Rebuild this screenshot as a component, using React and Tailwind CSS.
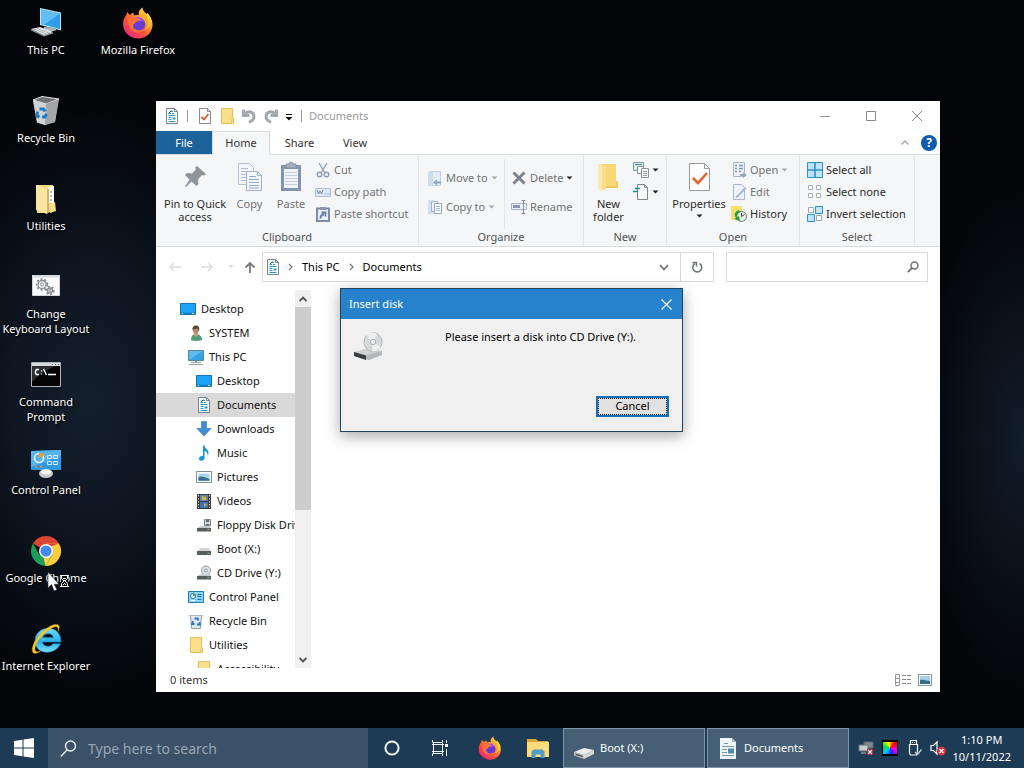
import React from "react";

/* ---------- shared shapes ---------- */

const Svg = ({ s = 16, w, h, box, children, className = "" }) => (
  <svg
    width={w || s}
    height={h || s}
    viewBox={box || `0 0 ${w || s} ${h || s}`}
    className={`shrink-0 ${className}`}
    aria-hidden="true"
  >
    {children}
  </svg>
);

const DocIcon = () => (
  <Svg>
    <path d="M2.500.5h8l3 3v12h-11z" fill="#fff" stroke="#74858f" />
    <path d="M10.500.5v3h3" fill="none" stroke="#74858f" />
    <path d="M7 3.500h2M5 5.500h2M8 5.500h2M4.500 7.500h7M4.500 9.500h3M4.500 11.500h3M4.500 13.500h7" stroke="#2d93c4" />
    <path d="M8.500 9.500h3v2h-3z" fill="#2d93c4" />
    <path d="M4.500 5.500l3-3" stroke="#1b6d85" />
  </Svg>
);

const Floppy = () => (
  <Svg>
    <path d="M8.500 2.500h6v6h-6z" fill="#d4d8da" stroke="#7b8083" />
    <path d="M10 3h3v2h-3zM10 7h3v1h-3z" fill="#60666a" />
    <path d="M4 9h10l1 2.500H1z" fill="#c9ccce" />
    <path d="M1 11h14v3.500H1z" fill="#5a5d60" />
    <path d="M11.500 12.500h2" stroke="#76d06c" />
  </Svg>
);

const Drive = () => (
  <Svg>
    <path d="M4 7h9l2 3.500H1z" fill="#d2d4d6" />
    <path d="M1 10h14v4H1z" fill="#5a5d60" />
    <path d="M11.500 12.500h2" stroke="#76d06c" />
  </Svg>
);

const CdDrive = () => (
  <Svg>
    <circle cx="10" cy="5.500" r="4.500" fill="#e1e3e4" stroke="#969a9d" />
    <circle cx="10" cy="5.500" r="1.500" fill="#fff" stroke="#969a9d" />
    <path d="M4 9h10l1 2.500H1z" fill="#c9ccce" />
    <path d="M1 11h14v3.500H1z" fill="#5a5d60" />
    <path d="M11.500 12.500h2" stroke="#76d06c" />
  </Svg>
);

const DesktopIcon = () => (
  <Svg>
    <path d="M.5 2.500h15v11H.5z" fill="#1ea1f8" stroke="#1272b5" />
    <path d="M1 11.500h14v1.500H1z" fill="#1780cb" />
    <path d="M2 12.500h1M12 12.500h2" stroke="#fff" />
  </Svg>
);

const UserIcon = () => (
  <Svg>
    <path d="M3 15c0-4 2-6 5-6s6 2 6 6c-3 1.200-8 1.200-11 0z" fill="#4f9d77" />
    <path d="M6 8h4l-.5 3L8 12l-2-1.500z" fill="#c99a7c" />
    <ellipse cx="7.800" cy="5" rx="2.900" ry="3.800" fill="#b98a6d" />
    <path d="M4.500 5C4 2 5.500.5 8 .5s4 2 3 5.500c-.5.5-.8-2-1.500-2.500-1.500.5-3.500.3-5 1.500z" fill="#57463d" />
  </Svg>
);

const PcSmall = () => (
  <Svg>
    <path d="M.5 1.500h15v10H.5z" fill="#5cbcf0" stroke="#5c8499" />
    <path d="M1 11 15 2v9z" fill="#37a1e2" />
    <path d="M7 12h2v1H7z" fill="#8b9ba4" />
    <path d="M3 13.500h10M1 15.500h14" stroke="#94a4ad" />
  </Svg>
);

const DownIcon = () => (
  <Svg>
    <path d="M5.500.5h5v7h4.500L8 15 1 7.500h4.500z" fill="#3d8ddb" stroke="#2e74b9" strokeWidth=".6" />
  </Svg>
);

const MusicIcon = () => (
  <Svg>
    <path d="M7 .5h1.500c.3 3 4 3.500 4 7.500 0 1-.4 2-1 2.800.4-3-1-4-3-5V13c0 1.700-1.500 2.800-3.200 2.800S3 14.800 3 13.500s1.300-2.600 3-2.600c.4 0 .7 0 1 .2z" fill="#1496de" />
  </Svg>
);

const PictureIcon = () => (
  <Svg>
    <path d="M.5 2.500h15v11H.5z" fill="#fff" stroke="#7e8c95" />
    <path d="M2.500 4.500h11v7h-11z" fill="#a9d6ee" />
    <path d="M2.500 8c3-1.500 6 0 11 2v1.500h-11z" fill="#3c6f77" />
    <path d="M2.500 10c4-1 8 0 11 .5v1h-11z" fill="#2e70a6" />
  </Svg>
);

const VideoIcon = () => (
  <Svg>
    <path d="M1 1h14v15H1z" fill="#3b3d40" />
    <path d="M4 2h8v6H4z" fill="#6d7f9e" />
    <path d="M4 9h8v6H4z" fill="#3f73b1" />
    <path d="M6 3l4 1v3H6zM8 10l3 2-3 2z" fill="#c8b64a" />
    <path d="M2.500 2v13M13.500 2v13" stroke="#e6e6e6" strokeDasharray="1.500 1.500" />
  </Svg>
);

const ControlSmall = () => (
  <Svg>
    <path d="M.5 2.500h15v11H.5z" fill="#8ed3f7" stroke="#1d7cb5" />
    <circle cx="5" cy="7" r="2.500" fill="#e8f6e0" stroke="#2f7aa8" />
    <path d="M5 7V4.500A2.500 2.500 0 0 1 7.500 7z" fill="#4d9b58" />
    <path d="M9.500 5.500h4M9.500 7.500h4M9.500 10.500h4" stroke="#1870b6" />
    <path d="M3 11.500h4" stroke="#fff" />
  </Svg>
);

const BinSmall = () => (
  <Svg>
    <path d="M2.500 2.500h11l-1 13h-9z" fill="#dce7ee" stroke="#8fa1ac" />
    <path d="M1 2.500h14" stroke="#a9b8c1" />
    <path d="M6.500 5.500h3l1 2M5 8l-1 3h2.500M11.500 9l.5 2.500H9" fill="none" stroke="#2e74b5" strokeWidth="1.800" />
  </Svg>
);

const FolderSmall = () => (
  <Svg>
    <path d="M2.500.5h11v9l1 1v5h-12z" fill="#fbe08c" stroke="#e3bf57" />
    <path d="M13.500 9.500l-1.500 6" stroke="#e8c766" />
  </Svg>
);

const PropsSmall = () => (
  <Svg>
    <path d="M2.500.5h8l3 3v12h-11z" fill="#fff" stroke="#8b8b8b" />
    <path d="M10.500.5v3h3" fill="none" stroke="#8b8b8b" />
    <path d="M4.500 9l2.500 2.500 4.500-5.500" fill="none" stroke="#dc5a2e" strokeWidth="1.800" />
  </Svg>
);

const Firefox = ({ s = 32 }) => (
  <Svg s={s} box="0 0 32 32">
    <defs>
      <linearGradient id="fx" x1="1" y1="0" x2=".15" y2="1">
        <stop offset="0" stopColor="#fff44f" />
        <stop offset=".35" stopColor="#ffa62b" />
        <stop offset=".65" stopColor="#ff5038" />
        <stop offset="1" stopColor="#e0208c" />
      </linearGradient>
    </defs>
    <path d="M3 10c1-1 1.500-3 2.500-5 .8 1.500 1.500 2 2.500 3 1-1 2-2 3.500-2.500-.3 1.500 0 2 1 3 1.500-.5 3-.5 4.500-.2C16 5.500 17.500 2.500 20.500.5c0 3 2 4.500 4 6.500l1-1c3.500 4 5.500 8 5 13C29.500 26.500 24 31.500 16.500 31.500 8 31.500 1 25.500 1 17c0-2.500.6-5 2-7z" fill="url(#fx)" />
    <circle cx="16.500" cy="17.500" r="6.800" fill="#6a3bd0" />
    <path d="M12 11c4-2.500 9-.5 10.500 4-2-1.500-4-1-5.500-.5z" fill="#9059ff" />
    <path d="M5 13c2-3 6-4 9-2.500 1 .5 2 1.500 4 1.500 0 2-2.500 2.500-4 3-1 1-1 2-3 3-1 4 6 8 11.500 3C20 27.500 9 27 7 19c-.6-2-1-4-2-6z" fill="#ff7139" />
    <path d="M20.500.5c0 5 5.500 7 6 13 .3 4-1 7-4 9 5-1 8-6 6-12l-3-4-1 1c-2-2-4-3.500-4-7z" fill="#ffd93b" opacity=".85" />
  </Svg>
);

/* ---------- desktop icons (32px) ---------- */

const PcBig = () => (
  <Svg s={32}>
    <path d="M10 1l21 4.500v18L10 18z" fill="#bfe2f5" />
    <path d="M11 2.500l19 4v15.500L11 17z" fill="#2d9fea" />
    <path d="M11 2.500l19 4L14 17.700 11 17z" fill="#62bdf3" />
    <path d="M14 20l12 .5v3l-7 1.500-6-2z" fill="#aab3b9" />
    <path d="M1 22l9-2 13 5-9 3.500z" fill="#e4e8ea" />
    <path d="M1 22v1.500l13 6V28zM14 28v1.500l9-3V25z" fill="#8d9499" />
    <path d="M4 22.300l12 4.500M7 21.500l12 4.500" stroke="#9ba3a9" strokeWidth=".8" />
  </Svg>
);

const BinBig = () => (
  <Svg s={32}>
    <path d="M3 5l26-1-4 23-10 3-8-2.500z" fill="#b2b6b8" />
    <path d="M3 5l13 4-1 21-8-2.500z" fill="#d0d3d5" />
    <path d="M3 5l9-3.500L29 4l-13 5z" fill="#6f7476" stroke="#dfe1e2" />
    <path d="M16 9l12.500-4.500L25 27l-10 3z" fill="#a3a6a8" />
    <g transform="translate(12 17.500)" fill="none" stroke="#1d7cc9" strokeWidth="3">
      <path d="M-2.500-3.500h4l1.500 2.500M-4.500-1l-.5 4.500 2.500 1M4.500 1.500l-1.500 3h-3" />
    </g>
  </Svg>
);

const UtilBig = () => (
  <Svg s={32}>
    <path d="M6 2h17l1 25-6 3H7z" fill="#f5d883" />
    <path d="M18 4l6-1v17h-6z" fill="#fff" />
    <path d="M21 8v12" stroke="#4d7890" strokeDasharray="2 2" />
    <path d="M6 2l11 4v25L6 27z" fill="#fbe5a0" />
    <path d="M17 6v25l2-2V6z" fill="#d7b458" />
    <path d="M19 22l6-3 1 9-6 2z" fill="#f7dd8c" />
  </Svg>
);

const Gear = ({ x, y, r }) => (
  <g transform={`translate(${x} ${y})`} fill="none" stroke="#888d91">
    <circle r={r} strokeWidth="1.300" />
    <circle r={r + 1.3} strokeWidth="1.800" strokeDasharray="2 1.800" />
    <circle r={r / 2.5} />
  </g>
);

const KeyboardBig = () => (
  <Svg s={32}>
    <path d="M2.500 4.500h27v20h-27z" fill="#fbfbfb" stroke="#cfd4d8" />
    <path d="M2 4h28v2.500H2z" fill="#d4dae2" />
    <Gear x={12} y={13.500} r={4} />
    <Gear x={20} y={19.500} r={2.500} />
  </Svg>
);

const CmdBig = () => (
  <Svg s={32}>
    <path d="M1.500 3.500h29v24h-29z" fill="#050505" stroke="#aeb3b7" />
    <path d="M2 4h28v3H2z" fill="#d7dbe0" />
    <path d="M22 5.500h1M25 5.500h1M28 5.500h1" stroke="#65727e" />
    <path d="M2 7h24Q12 12 2 23z" fill="#2d3033" />
    <path d="M9 10.500H6.500L5.500 12v2.500l1 1H9M11.500 11.500v1M11.500 14.500v1M13.500 10l3 6M18 15.500h8" fill="none" stroke="#fff" strokeWidth="1.400" />
  </Svg>
);

const ControlBig = () => (
  <Svg s={32}>
    <path d="M1 4l30-1v20H1z" fill="#2f9ae0" />
    <path d="M1 4l30-1v6L1 20z" fill="#56b4ec" />
    <circle cx="9" cy="11" r="4.500" fill="none" stroke="#e6f4fb" strokeWidth="1.600" />
    <path d="M9 11V6h3.500l1.500 3z" fill="#f39c31" />
    <path d="M17.500 8.500h4v3h-4zM23.500 8.500h4v3h-4zM17.500 14.500h4v3h-4zM23.500 14.500h4v3h-4z" fill="none" stroke="#d8f0fb" />
    <path d="M5 19.500h2M10 19.500h2" stroke="#e5894e" strokeWidth="2" />
    <ellipse cx="16" cy="26.500" rx="7" ry="4.500" fill="#c9cccd" />
    <ellipse cx="16" cy="25" rx="5" ry="2.500" fill="#f6f7f7" />
  </Svg>
);

const ChromeBig = () => (
  <Svg s={32}>
    <path d="M16 16 3 8.500A15 15 0 0 1 29 8.500z" fill="#dc4437" />
    <path d="M16 8.500h13A15 15 0 0 1 15.500 31z" fill="#fdce3f" />
    <path d="M3 8.500A15 15 0 0 0 15.500 31l7-11L16 16l-6.500 4z" fill="#1f9d58" />
    <path d="M22 20 15.500 31 13 20z" fill="#fdce3f" />
    <path d="M16 8.500h13l-8 3z" fill="#dc4437" />
    <circle cx="16" cy="16" r="7" fill="#f4f4f4" />
    <circle cx="16" cy="16" r="5.500" fill="#4688f1" />
  </Svg>
);

const IeBig = () => (
  <Svg s={32}>
    <defs>
      <linearGradient id="ie" x1="0" y1="0" x2="0" y2="1">
        <stop offset="0" stopColor="#78dcfa" />
        <stop offset=".55" stopColor="#29aeea" />
        <stop offset="1" stopColor="#7be0fb" />
      </linearGradient>
    </defs>
    <path d="M31 19H12.500c.3 4.500 8 6 10.500 1.800h7.500C25 33 5 32 5 18 5 2 31 0 31 19zM12.800 14.500h10.500c-.3-5-10-5-10.500 0z" fill="url(#ie)" stroke="#1689c9" strokeWidth=".6" />
    <path d="M3.500 30C-2 25 12 4 25 1.500c5-.8 5 2.500 3 7C29 3 26 2.500 21 5.500 10 12 2 25 6 28.500c1 .8 3 .2 5-1-3 2.500-6 3.500-7.500 2.500z" fill="#fbc72b" stroke="#d99a12" strokeWidth=".4" />
  </Svg>
);

const desktopIcons = [
  { label: "This PC", Icon: PcBig },
  { label: "Recycle Bin", Icon: BinBig },
  { label: "Utilities", Icon: UtilBig },
  { label: "Change\nKeyboard Layout", Icon: KeyboardBig },
  { label: "Command\nPrompt", Icon: CmdBig },
  { label: "Control Panel", Icon: ControlBig },
  { label: "Google Chrome", Icon: ChromeBig },
  { label: "Internet Explorer", Icon: IeBig },
  { label: "Mozilla Firefox", Icon: Firefox },
];

/* ---------- ribbon ---------- */

const Caret = ({ light }) => (
  <Svg w={7} h={4}>
    <path d="M.5.5h6l-3 3z" fill={light ? "#a5a9ad" : "#222"} />
  </Svg>
);

const PinIcon = () => (
  <Svg s={32}>
    <path d="M17 5l9 8-2 1.500-2-.5-4 4.500.5 4.500-2 2-5-4.500L6 26l-1-.5 4.500-7L5 14l2-2 5 .5L16 8.500 15 6.500z" fill="#8f959b" transform="translate(1 2)" />
  </Svg>
);

const CopyIcon = () => (
  <Svg s={32}>
    <path d="M4.500 4.500h11l4 4v17h-15z" fill="#f3f7fd" stroke="#b5c0d4" />
    <path d="M7 9.500h7M7 12.500h9M7 15.500h9M7 18.500h9M7 21.500h9" stroke="#a9bee0" />
    <path d="M12.500 12.500h11l4 4v15h-15z" fill="#f3f7fd" stroke="#a4b1ca" />
    <path d="M23.500 12.500v4h4" fill="none" stroke="#a4b1ca" />
    <path d="M15 17.500h7M15 20.500h10M15 23.500h10M15 26.500h10M15 29h10" stroke="#93aad2" />
  </Svg>
);

const PasteIcon = () => (
  <Svg s={32}>
    <path d="M6.500 6.500h19v25h-19z" fill="#8296b4" stroke="#8493ab" />
    <path d="M9 10h14v19H9z" fill="#f1f5fb" />
    <path d="M11 5h3a2 2 0 0 1 4 0h3v4H11z" fill="#a6afbd" stroke="#7f8ba0" strokeWidth=".8" />
    <path d="M10 13.500h12M10 16.500h12M10 19.500h12M10 22.500h12M10 25.500h12" stroke="#c2cee0" />
  </Svg>
);

const CutIcon = () => (
  <Svg>
    <path d="M4 1l6 10M12 1 6 11" stroke="#9aa3ac" strokeWidth="1.400" />
    <circle cx="4.500" cy="12.500" r="2.300" fill="none" stroke="#8d9fb5" strokeWidth="1.400" />
    <circle cx="11.500" cy="12.500" r="2.300" fill="none" stroke="#8d9fb5" strokeWidth="1.400" />
  </Svg>
);

const CopyPathIcon = () => (
  <Svg>
    <path d="M.5 4.500h15v8H.5z" fill="#dfe8f7" stroke="#b2bdd6" />
    <path d="M2 6l1.500 4L5 7l1.500 3L8 6M9.500 10h1M11.500 10h1M13.500 10h1" fill="none" stroke="#7a81a8" />
  </Svg>
);

const ShortcutIcon = () => (
  <Svg>
    <path d="M2 2.500h12v12.500H2z" fill="#e9eff9" stroke="#7d8ba5" strokeWidth="2" />
    <path d="M5 1h6v3H5z" fill="#8a97ae" />
    <path d="M5.500 12.500C5.500 10 7 8.500 9 8.500M6.500 6.500h4V10.500" fill="none" stroke="#6a7b9c" strokeWidth="1.800" />
  </Svg>
);

const MoveIcon = () => (
  <Svg>
    <path d="M2.500 1.500h11v14h-11z" fill="#e3edf8" stroke="#c1cfe1" />
    <path d="M1 2h5v14H1z" fill="#cfdcec" />
    <path d="M14 11.500H10v-2l-4 3 4 3v-2h4z" fill="#93a5c0" />
  </Svg>
);

const CopyToIcon = () => (
  <Svg>
    <path d="M1 1h6v14H1z" fill="#d2deee" />
    <path d="M4.500 2.500h6v10h-6z" fill="#edf3fb" stroke="#a8b7cf" />
    <path d="M7.500 4.500h7v10h-7z" fill="#fff" stroke="#8fa4c4" />
    <path d="M9 7.500h4M9 9.500h4M9 11.500h4" stroke="#a5b8d8" />
  </Svg>
);

const DeleteIcon = () => (
  <Svg>
    <path d="M2.500 2.500l11 11M13.500 2.500l-11 11" stroke="#7c8390" strokeWidth="3" />
  </Svg>
);

const RenameIcon = () => (
  <Svg>
    <path d="M.5 4.500h15v6H.5z" fill="#eef3fb" stroke="#a3b1cb" />
    <path d="M2 6h7v3H2z" fill="#8d93bd" />
    <path d="M12.500 1v13M10.500 1.500h4M10.500 14.500h4" stroke="#84909f" />
  </Svg>
);

const NewFolderIcon = () => (
  <Svg s={32}>
    <path d="M7 5h16v17l2 1v6H9l-2-1z" fill="#f3c85a" />
    <path d="M5 5h4l3 3v23l-4 1-3-3z" fill="#fdeab0" />
    <path d="M11 5h12v22h-11z" fill="#f9d774" />
    <path d="M9 5l4 3v22l-4 1z" fill="#fbdf8d" />
  </Svg>
);

const NewItemIcon = () => (
  <Svg>
    <path d="M.5.5h10v8h-10z" fill="#dcefed" stroke="#7c9a9e" />
    <path d="M2 2.500h7" stroke="#3a8d8d" />
    <path d="M4.500 4.500h6v7h-6z" fill="#f7f9fb" stroke="#8a9298" />
    <path d="M8.500 6.500h7v9h-7z" fill="#fff" stroke="#8a9298" />
    <path d="M10 9.500h4M10 11.500h4M10 13.500h4" stroke="#9aa4ac" />
  </Svg>
);

const EasyAccessIcon = () => (
  <Svg>
    <path d="M4.500.5h7l3 3v12h-10z" fill="#fff" stroke="#808488" />
    <path d="M11.500.5v3h3" fill="none" stroke="#808488" />
    <path d="M2 4.500h5M0 7.500h5" stroke="#23878f" strokeWidth="1.400" />
  </Svg>
);

const PropertiesIcon = () => (
  <Svg s={32}>
    <path d="M6.500 4.500h15l5 5v22h-20z" fill="#fff" stroke="#9a9a9a" />
    <path d="M21.500 4.500v5h5" fill="none" stroke="#9a9a9a" />
    <path d="M10 19l5 5 9-10" fill="none" stroke="#e0622c" strokeWidth="2.600" />
  </Svg>
);

const OpenIcon = () => (
  <Svg>
    <path d="M2.500.5h11v14h-11z" fill="#edf2fa" stroke="#a8b5cb" />
    <path d="M4 3.500h2M8 3.500h4M4 6.500h2M8 6.500h4M4 9.500h2M8 9.500h2" stroke="#8193b4" strokeWidth="1.500" />
    <path d="M9 12h3v-2l4 3-4 3v-2H9z" fill="#98a6bd" />
  </Svg>
);

const EditIcon = () => (
  <Svg>
    <path d="M2.500.5h8l3 3v12h-11z" fill="#edf2fb" stroke="#a8b5cb" />
    <path d="M4 13.500 14 3l1.500 1.500L6 14z" fill="#a5b5cf" />
  </Svg>
);

const HistoryIcon = () => (
  <Svg>
    <path d="M0 0h11v14H0z" fill="#f9dd6f" />
    <circle cx="10.500" cy="10.500" r="5" fill="#e5ece6" stroke="#6e7a78" />
    <path d="M10.500 7v3.500l3-2" fill="none" stroke="#444" />
    <path d="M8 4c-4 1-5.500 5-3 8l-2 1 6 2-1-5-1.500 1C6 9 6.500 7 9 6z" fill="#2e9e3a" />
  </Svg>
);

const SelectAllIcon = () => (
  <Svg>
    <path d="M.5.5h15v15H.5z" fill="#bfe3fb" stroke="#2f8fd6" />
    <path d="M8 0v16M0 8h16" stroke="#2f8fd6" strokeWidth="1.600" />
  </Svg>
);

const SelectNoneIcon = () => (
  <Svg>
    <path d="M1.500 1.500h4v4h-4zM9.500 1.500h4v4h-4zM1.500 9.500h4v4h-4zM9.500 9.500h4v4h-4z" fill="#fff" stroke="#a9adb0" />
  </Svg>
);

const InvertIcon = () => (
  <Svg>
    <path d="M1.500 1.500h5v5h-5zM9.500 9.500h5v5h-5z" fill="#fff" stroke="#9ba7b0" />
    <path d="M8.500.5h7v7h-7zM.5 8.500h7v7h-7z" fill="#bfe3fb" stroke="#2f8fd6" />
  </Svg>
);

const Big = ({ Icon, children, dim, caret, className = "" }) => (
  <button
    type="button"
    className={`flex flex-col items-center text-center leading-[13px] ${dim ? "text-[#707274]" : "text-[#2b2b2b]"} ${className}`}
  >
    <Icon />
    <span className="mt-1.5">{children}</span>
    {caret && (
      <span className="mt-1">
        <Caret />
      </span>
    )}
  </button>
);

const Small = ({ Icon, children, dim, caret, label }) => (
  <button
    type="button"
    aria-label={label}
    className={`flex h-[22px] items-center gap-[3px] whitespace-nowrap ${dim ? "text-[#707274]" : "text-[#2b2b2b]"}`}
  >
    <Icon />
    {children}
    {caret && <Caret light={caret === "light"} />}
  </button>
);

const Group = ({ name, className = "", children }) => (
  <section className={`flex flex-col border-r border-[#e3e6e9] ${className}`} aria-label={name}>
    <div className="flex flex-1 pt-1">{children}</div>
    <h2 className="pb-px text-center leading-4 text-[#505254]">{name}</h2>
  </section>
);

const Ribbon = () => (
  <div className="flex h-[92px] shrink-0 overflow-hidden border-b border-[#dadbdc] bg-[#f5f6f7]">
    <Group name="Clipboard" className="w-[263px]">
      <Big Icon={PinIcon} className="w-[78px]">
        Pin to Quick access
      </Big>
      <Big Icon={CopyIcon} dim className="w-[31px]">
        Copy
      </Big>
      <Big Icon={PasteIcon} dim className="ml-2 w-[36px]">
        Paste
      </Big>
      <div className="ml-1.5">
        <Small Icon={CutIcon} dim>Cut</Small>
        <Small Icon={CopyPathIcon} dim>Copy path</Small>
        <Small Icon={ShortcutIcon} dim>Paste shortcut</Small>
      </div>
    </Group>
    <Group name="Organize" className="w-[165px]">
      <div className="flex w-[86px] flex-col gap-[7px] border-r border-[#e3e6e9] pt-2 pl-2">
        <Small Icon={MoveIcon} dim caret="light">Move to</Small>
        <Small Icon={CopyToIcon} dim caret="light">Copy to</Small>
      </div>
      <div className="flex flex-col gap-[7px] pt-2 pl-1.5">
        <Small Icon={DeleteIcon} dim caret="dark">Delete</Small>
        <Small Icon={RenameIcon} dim>Rename</Small>
      </div>
    </Group>
    <Group name="New" className="w-[83px]">
      <Big Icon={NewFolderIcon} className="ml-1 w-[41px]">
        New folder
      </Big>
      <div className="ml-1">
        <Small Icon={NewItemIcon} caret="dark" label="New item" />
        <Small Icon={EasyAccessIcon} caret="dark" label="Easy access" />
      </div>
    </Group>
    <Group name="Open" className="w-[133px]">
      <Big Icon={PropertiesIcon} caret className="w-[64px]">
        Properties
      </Big>
      <div>
        <Small Icon={OpenIcon} dim caret="light">Open</Small>
        <Small Icon={EditIcon} dim>Edit</Small>
        <Small Icon={HistoryIcon}>History</Small>
      </div>
    </Group>
    <Group name="Select" className="w-[115px]">
      <div className="ml-[7px]">
        <Small Icon={SelectAllIcon}>Select all</Small>
        <Small Icon={SelectNoneIcon}>Select none</Small>
        <Small Icon={InvertIcon}>Invert selection</Small>
      </div>
    </Group>
  </div>
);

/* ---------- explorer window ---------- */

const Undo = ({ flip }) => (
  <Svg>
    <path
      d="M2.500 1.500v6h6M3.500 6.500C6.500 2.500 13 3 13 8.500c0 3-2 4.500-5 6"
      fill="none"
      stroke="#a3a9ae"
      strokeWidth="3"
      transform={flip ? "translate(16 0) scale(-1 1)" : undefined}
    />
  </Svg>
);

const TitleBar = () => (
  <header className="flex h-[30px] shrink-0 items-center pl-2">
    <DocIcon />
    <span className="ml-[7px] h-3 w-px bg-[#999]" />
    <div className="ml-[9px] flex items-center gap-1.5">
      <button type="button" aria-label="Properties"><PropsSmall /></button>
      <button type="button" aria-label="New folder"><FolderSmall /></button>
      <button type="button" aria-label="Undo"><Undo /></button>
      <button type="button" aria-label="Redo"><Undo flip /></button>
      <button type="button" aria-label="Customize Quick Access Toolbar" className="pt-px">
        <Svg w={8} h={8}>
          <path d="M1 1.500h6" stroke="#111" />
          <path d="M.5 4h7L4 7.500z" fill="#111" />
        </Svg>
      </button>
    </div>
    <span className="ml-2 h-3 w-px bg-[#999]" />
    <h1 className="ml-[7px] text-[#999]">Documents</h1>
    <div className="ml-auto flex">
      <button type="button" aria-label="Minimize" className="flex h-7 w-[46px] items-center justify-center">
        <Svg w={10} h={10}><path d="M0 5.500h10" stroke="#999" /></Svg>
      </button>
      <button type="button" aria-label="Maximize" className="flex h-7 w-[46px] items-center justify-center">
        <Svg w={10} h={10}><path d="M.5.5h9v9h-9z" fill="none" stroke="#888" /></Svg>
      </button>
      <button type="button" aria-label="Close" className="flex h-7 w-[46px] items-center justify-center">
        <Svg w={10} h={10}><path d="M0 0l10 10M10 0L0 10" stroke="#888" /></Svg>
      </button>
    </div>
  </header>
);

const Tabs = () => (
  <nav className="flex h-6 shrink-0 items-stretch border-b border-[#dadbdc] text-[#333]">
    <button type="button" className="w-14 bg-[#1d639b] pt-px text-white">File</button>
    <button type="button" className="-mb-px w-[58px] border-x border-t border-[#dadbdc] bg-[#f5f6f7]">Home</button>
    <button type="button" className="w-[59px] pt-px">Share</button>
    <button type="button" className="w-[52px] pt-px">View</button>
    <div className="ml-auto flex items-center gap-3 pr-[3px]">
      <button type="button" aria-label="Minimize the Ribbon">
        <Svg w={8} h={5}><path d="M.5 4.500 4 1l3.500 3.500" fill="none" stroke="#999" strokeWidth="1.200" /></Svg>
      </button>
      <button type="button" aria-label="Help" className="size-4 rounded-full bg-[#0b5cad] text-center text-[12px] leading-4 font-bold text-white">
        ?
      </button>
    </div>
  </nav>
);

const Chevron = () => (
  <Svg w={5} h={8}><path d="M1 1l3 3-3 3" fill="none" stroke="#777" strokeWidth="1.200" /></Svg>
);

const AddressRow = () => (
  <div className="flex shrink-0 items-center px-3 py-[5px] text-black">
    <div className="flex w-[94px] items-center justify-between pr-1.5">
      <button type="button" aria-label="Back">
        <Svg w={14} h={10}><path d="M13 5H2M6 1 2 5l4 4" fill="none" stroke="#dadcde" strokeWidth="1.400" /></Svg>
      </button>
      <button type="button" aria-label="Forward" className="ml-2">
        <Svg w={14} h={10}><path d="M1 5h11M8 1l4 4-4 4" fill="none" stroke="#dadcde" strokeWidth="1.400" /></Svg>
      </button>
      <button type="button" aria-label="Recent locations" className="ml-1">
        <Svg w={6} h={4}><path d="M0 0h6L3 3z" fill="#dadcde" /></Svg>
      </button>
      <button type="button" aria-label="Up">
        <Svg w={12} h={12}><path d="M6 12V2M1.500 6.500 6 2l4.500 4.500" fill="none" stroke="#77797c" strokeWidth="1.800" /></Svg>
      </button>
    </div>
    <div className="flex h-[30px] flex-1 border border-[#d9d9d9]">
      <div className="flex flex-1 items-center pl-0.5">
        <DocIcon />
        <span className="ml-[7px]"><Chevron /></span>
        <button type="button" className="ml-[9px]">This PC</button>
        <span className="ml-[9px]"><Chevron /></span>
        <button type="button" className="ml-[9px]">Documents</button>
      </div>
      <button type="button" aria-label="Previous locations" className="flex w-8 items-center justify-center">
        <Svg w={10} h={7}><path d="M1 1l4 4.500L9 1" fill="none" stroke="#707376" strokeWidth="1.800" /></Svg>
      </button>
      <button type="button" aria-label="Refresh" className="flex w-[33px] items-center justify-center border-l border-[#d9d9d9]">
        <Svg w={12} h={12}>
          <path d="M8.500 2.500A4.500 4.500 0 1 1 4 2.500" fill="none" stroke="#707376" strokeWidth="1.500" />
          <path d="M1.500 1.500h4v4" fill="none" stroke="#707376" strokeWidth="1.500" />
        </Svg>
      </button>
    </div>
    <label className="ml-3 flex h-[30px] w-[202px] items-center border border-[#d9d9d9] pr-2">
      <input type="search" aria-label="Search Documents" className="min-w-0 flex-1 outline-none" />
      <Svg w={12} h={12}>
        <circle cx="7.500" cy="4.500" r="3.500" fill="none" stroke="#707376" strokeWidth="1.500" />
        <path d="M5 7 .8 11.200" stroke="#707376" strokeWidth="1.800" />
      </Svg>
    </label>
  </div>
);

const tree = [
  { label: "Desktop", Icon: DesktopIcon, pad: "pl-6" },
  { label: "SYSTEM", Icon: UserIcon, pad: "pl-8" },
  { label: "This PC", Icon: PcSmall, pad: "pl-8" },
  { label: "Desktop", Icon: DesktopIcon, pad: "pl-10" },
  { label: "Documents", Icon: DocIcon, pad: "pl-10", selected: true },
  { label: "Downloads", Icon: DownIcon, pad: "pl-10" },
  { label: "Music", Icon: MusicIcon, pad: "pl-10" },
  { label: "Pictures", Icon: PictureIcon, pad: "pl-10" },
  { label: "Videos", Icon: VideoIcon, pad: "pl-10" },
  { label: "Floppy Disk Drive (A:)", Icon: Floppy, pad: "pl-10" },
  { label: "Boot (X:)", Icon: Drive, pad: "pl-10" },
  { label: "CD Drive (Y:)", Icon: CdDrive, pad: "pl-10" },
  { label: "Control Panel", Icon: ControlSmall, pad: "pl-8" },
  { label: "Recycle Bin", Icon: BinSmall, pad: "pl-8" },
  { label: "Utilities", Icon: FolderSmall, pad: "pl-8" },
  { label: "Accessibility", Icon: FolderSmall, pad: "pl-10" },
];

const Explorer = () => (
  <section className="absolute top-[101px] right-[84px] bottom-[36px] left-[156px] flex flex-col overflow-hidden bg-white" aria-label="Documents">
    <TitleBar />
    <Tabs />
    <Ribbon />
    <AddressRow />
    <div className="mt-[3px] flex min-h-0 flex-1">
      <ul className="w-[139px] overflow-hidden pt-[7px] text-[#111]">
        {tree.map((t, i) => (
          <li key={i}>
            <button
              type="button"
              className={`flex h-6 w-full items-center gap-[5px] overflow-hidden whitespace-nowrap ${t.pad} ${t.selected ? "bg-[#d9d9d9]" : ""}`}
            >
              <t.Icon />
              {t.label}
            </button>
          </li>
        ))}
      </ul>
      <div className="flex w-4 flex-col items-center bg-[#f0f0f0]" aria-hidden="true">
        <div className="flex h-[17px] items-center">
          <Svg w={8} h={6}><path d="M.5 5 4 1.500 7.500 5" fill="none" stroke="#505050" strokeWidth="1.800" /></Svg>
        </div>
        <div className="h-[203px] w-full bg-[#cdcdcd]" />
        <div className="mt-auto flex h-[17px] items-center">
          <Svg w={8} h={6}><path d="M.5 1 4 4.500 7.500 1" fill="none" stroke="#505050" strokeWidth="1.800" /></Svg>
        </div>
      </div>
    </div>
    <footer className="flex h-6 shrink-0 items-center justify-between pt-px pr-[7px] pl-3.5 text-[#333]">
      <span>0 items</span>
      <div className="flex gap-1.5">
        <button type="button" aria-label="Details view">
          <Svg>
            <path d="M.5 1.500h4v11h-4zM.5 5.500h4M.5 9.500h4" fill="none" stroke="#999" />
            <path d="M7 2.500h4M12 2.500h4M7 6.500h4M12 6.500h4M7 10.500h4M12 10.500h4" stroke="#888" />
          </Svg>
        </button>
        <button type="button" aria-label="Large icons view">
          <Svg>
            <path d="M1.500 1.500h13v11h-13z" fill="#fff" stroke="#7d94a3" />
            <path d="M3 3h10v8H3z" fill="#9fd0ec" />
            <path d="M3 7c4-1 7 1 10 1v3H3z" fill="#336f86" />
          </Svg>
        </button>
      </div>
    </footer>
  </section>
);

/* ---------- dialog ---------- */

const Dialog = () => (
  <section
    role="dialog"
    aria-labelledby="dialog-title"
    className="absolute top-[288px] left-[340px] flex w-[343px] flex-col border border-[#24445c] bg-[#f0f0f0] text-black shadow-[0_4px_14px_rgba(0,0,0,0.35)]"
  >
    <header className="flex h-[30px] items-center justify-between bg-[#2782cd] pr-2.5 pl-2 text-white">
      <h2 id="dialog-title">Insert disk</h2>
      <button type="button" aria-label="Close">
        <Svg w={11} h={11}><path d="M.5.5l10 10M10.500.5l-10 10" stroke="#fff" strokeWidth="1.100" /></Svg>
      </button>
    </header>
    <div className="flex pt-2.5 pl-3">
      <Svg s={32}>
        <path d="M1 23l14-4 14 3v3l-12 5L1 27z" fill="#cfd1d2" />
        <path d="M1 23l12 3.500V31L1 27z" fill="#3a3c3e" />
        <path d="M13 26.500 29 22v4l-13 5-3-.5z" fill="#b4b7b9" />
        <ellipse cx="20" cy="13" rx="9" ry="9.500" fill="#d5d9d9" stroke="#b2b6b8" />
        <path d="M20 13 13 6c4-4 8-3 11-1zM20 13l8 5c-2 3-5 4.500-9 4.500z" fill="#eef0f0" />
        <circle cx="20" cy="13" r="2.600" fill="#f5f5f5" stroke="#a8acae" />
      </Svg>
      <p className="ml-[60px] leading-4">Please insert a disk into CD Drive (Y:).</p>
    </div>
    <div className="flex justify-end pt-[35px] pr-[13px] pb-3.5">
      <button type="button" className="h-[21px] w-[73px] border-2 border-[#1670b8] bg-[#e1e1e1]">
        <span className="flex h-full items-center justify-center border border-dotted border-[#111]">Cancel</span>
      </button>
    </div>
  </section>
);

/* ---------- taskbar ---------- */

const TaskButton = ({ Icon, children }) => (
  <button type="button" className="flex w-[142px] items-center gap-1 border border-[#7f94a5] bg-[#465f75] pl-2 text-white">
    <Icon />
    {children}
  </button>
);

const DriveTask = () => (
  <Svg w={24} h={24}>
    <path d="M2 16l10-4 10 2-10 5z" fill="#eceeed" />
    <path d="M2 16l10 3v4L2 19.500z" fill="#c3c7c7" />
    <path d="M12 19l10-5v4l-10 5z" fill="#d4d7d5" />
    <path d="M3.500 17.500l7 2.200v1.500l-7-2.200z" fill="#4a4e50" />
  </Svg>
);

const DocTask = () => (
  <Svg w={24} h={24}>
    <path d="M4 2h12l4 4v17H4z" fill="#eef5f8" />
    <path d="M16 2v4h4z" fill="#9eb6c2" />
    <path d="M8 7.500h4M6 10.500h12M6 13.500h5M6 16.500h5M6 19.500h12" stroke="#7695a7" />
    <path d="M12 12.500h6v5h-6z" fill="#5488a5" />
  </Svg>
);

const Taskbar = () => (
  <footer className="flex h-10 shrink-0 bg-[#1d3b54] text-white">
    <button type="button" aria-label="Start" className="flex w-12 items-center justify-center">
      <Svg w={20} h={20}>
        <path d="M0 3l8.500-1.200V9.500H0zM9.500 1.600 20 0v9.500H9.500zM0 10.500h8.500v7.700L0 17zM9.500 10.500H20V20L9.500 18.400z" fill="#fff" />
      </Svg>
    </button>
    <label className="flex w-80 items-center gap-3 bg-[#3a5167] pl-3">
      <Svg w={16} h={17}>
        <circle cx="10.500" cy="6" r="5" fill="none" stroke="#e8edf1" strokeWidth="1.400" />
        <path d="M7 10 .8 16.500" stroke="#e8edf1" strokeWidth="1.400" />
      </Svg>
      <input
        type="text"
        aria-label="Search"
        placeholder="Type here to search"
        className="min-w-0 flex-1 bg-transparent text-[14px] outline-none placeholder:text-[#98a6b3]"
      />
    </label>
    <button type="button" aria-label="Cortana" className="flex w-12 items-center justify-center">
      <Svg w={16} h={16}><circle cx="8" cy="8" r="6.600" fill="none" stroke="#f2f6f8" strokeWidth="2" /></Svg>
    </button>
    <button type="button" aria-label="Task View" className="flex w-12 items-center justify-center">
      <Svg w={18} h={16}>
        <path d="M1.500 0v2.500h10V0M1.500 16v-2.500h10V16M2.500 3v10M11.500 3v10M1 4.500h12M1 11.500h12M15.500 0v3M15.500 9v7" fill="none" stroke="#eef2f5" />
        <path d="M14 4h3v3h-3z" fill="#fff" />
      </Svg>
    </button>
    <button type="button" aria-label="Mozilla Firefox" className="flex w-[51px] items-center justify-center">
      <Firefox s={24} />
    </button>
    <button type="button" aria-label="File Explorer" className="flex w-[46px] items-center justify-center">
      <Svg w={24} h={24}>
        <path d="M1 3h9l2 2h10v4H1z" fill="#dca73a" />
        <path d="M1 6h22v15H1z" fill="#fbdc78" />
        <path d="M5.500 22v-6.500l2-2h9l2 2V22h-4v-3.500h-5V22z" fill="#4d9fc6" />
      </Svg>
    </button>
    <div className="ml-0.5 flex gap-0.5">
      <TaskButton Icon={DriveTask}>Boot (X:)</TaskButton>
      <TaskButton Icon={DocTask}>Documents</TaskButton>
    </div>
    <div className="ml-auto flex items-center gap-2">
      <button type="button" aria-label="Network disconnected">
        <Svg>
          <path d="M6 2h9v6H6z" fill="#7f8a93" stroke="#5a6670" />
          <path d="M1 5h9v6H1z" fill="#c3ccd1" stroke="#69747d" />
          <path d="M3 13h5M10 10h3" stroke="#b9c3ca" />
          <path d="M9 9h6v6H9z" fill="#b32222" />
          <path d="M10 10l4 4M14 10l-4 4" stroke="#fff" strokeWidth="1.100" />
        </Svg>
      </button>
      <button type="button" aria-label="Display" className="flex size-4 items-center justify-center border border-black bg-black">
        <span className="h-3 w-full bg-[conic-gradient(from_45deg,#ff0000,#ff00ff,#2020ff,#00cfff,#00e040,#ffff00,#ff0000)]" />
      </button>
      <button type="button" aria-label="Safely Remove Hardware">
        <Svg>
          <path d="M4.500.5h6v4h-6zM3.500 4.500h8v7l-1 3.500h-6l-1-2z" fill="none" stroke="#f1f4f6" strokeWidth="1.200" />
          <path d="M6 2.500h1M8 2.500h1" stroke="#fff" />
          <path d="M9 12l2.500 2.500 4-5" fill="none" stroke="#b7d0de" strokeWidth="1.500" />
        </Svg>
      </button>
      <button type="button" aria-label="Volume muted">
        <Svg>
          <path d="M1 5.500h2.500L7 2v12l-3.500-3.500H1z" fill="none" stroke="#fff" strokeWidth="1.200" />
          <circle cx="11.500" cy="11" r="4.500" fill="#d4333c" />
          <path d="M9.500 9l4 4M13.500 9l-4 4" stroke="#fff" strokeWidth="1.200" />
        </Svg>
      </button>
    </div>
    <time className="ml-1.5 flex flex-col justify-center pr-[13px] pb-px text-center leading-[17px]">
      <span>1:10 PM</span>
      <span>10/11/2022</span>
    </time>
  </footer>
);

/* ---------- page ---------- */

export default function App() {
  return (
    <div className="flex min-h-screen flex-col bg-[#030508] font-['Noto_Sans','Open_Sans',sans-serif] text-[11px]">
      <main className="relative flex-1 overflow-hidden bg-[radial-gradient(ellipse_180px_300px_at_90px_400px,#14202d_0%,#0d1520_45%,transparent_100%),radial-gradient(ellipse_110px_260px_at_100%_440px,#111d2a_0%,transparent_100%)]">
        <div className="grid auto-cols-[92px] grid-flow-col grid-rows-[repeat(8,88px)]">
          {desktopIcons.map(({ label, Icon }) => (
            <button
              key={label}
              type="button"
              className="flex flex-col items-center pt-[7px] text-center leading-[15px] text-white [text-shadow:1px_1px_2px_#000]"
            >
              <Icon />
              <span className="mt-[3px] whitespace-pre-line">{label}</span>
            </button>
          ))}
        </div>
        <Explorer />
        <Dialog />
        <Svg w={22} h={22} className="absolute top-[571px] left-[47px]">
          <path d="M1 1v16l3.500-3.500L7 20l3-1.200-2.700-5.600H12z" fill="#fff" stroke="#222" strokeWidth=".6" />
          <path d="M14 4h7v12h-7z" fill="#111" />
          <path d="M13 4.500h9M13 15.500h9M14.500 5v2.500l2.500 2.500-2.500 2.500V15M20.500 5v2.500L18 10l2.500 2.500V15" fill="none" stroke="#fff" />
          <path d="M16 7.500h3M17 9.500h1M16 13.500h1M18 13.500h1M17 12.500h1" stroke="#fff" />
        </Svg>
      </main>
      <Taskbar />
    </div>
  );
}
